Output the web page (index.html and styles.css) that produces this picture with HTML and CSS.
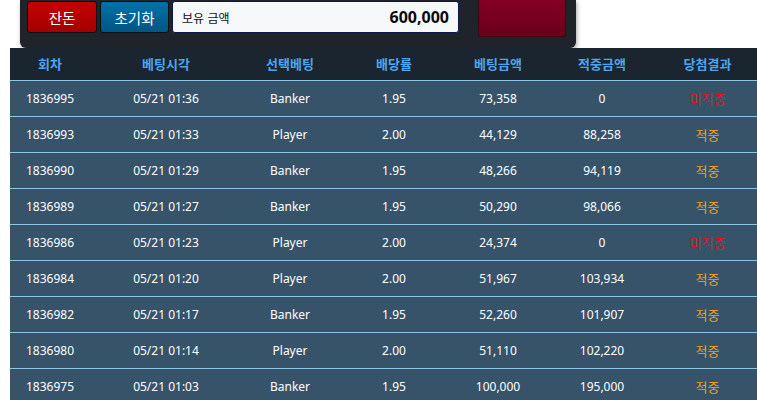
FILE: index.html
```html
<!DOCTYPE html>
<html lang="ko">
<head>
<meta charset="utf-8">
<link rel="stylesheet" href="styles.css">
</head>
<body>
<div class="panel">
  <button class="btn btn-red">잔돈</button>
  <button class="btn btn-blue">초기화</button>
  <div class="balance"><span class="label">보유 금액</span><span class="amount">600,000</span></div>
  <div class="action"></div>
</div>
<table class="bets">
  <colgroup>
    <col class="c1"><col class="c2"><col class="c3"><col class="c4"><col class="c5"><col class="c6"><col class="c7">
  </colgroup>
  <thead>
    <tr><th>회차</th><th>베팅시각</th><th>선택베팅</th><th>배당률</th><th>베팅금액</th><th>적중금액</th><th>당첨결과</th></tr>
  </thead>
  <tbody>
    <tr><td>1836995</td><td>05/21 01:36</td><td>Banker</td><td>1.95</td><td>73,358</td><td>0</td><td class="lose">미적중</td></tr>
    <tr><td>1836993</td><td>05/21 01:33</td><td>Player</td><td>2.00</td><td>44,129</td><td>88,258</td><td class="win">적중</td></tr>
    <tr><td>1836990</td><td>05/21 01:29</td><td>Banker</td><td>1.95</td><td>48,266</td><td>94,119</td><td class="win">적중</td></tr>
    <tr><td>1836989</td><td>05/21 01:27</td><td>Banker</td><td>1.95</td><td>50,290</td><td>98,066</td><td class="win">적중</td></tr>
    <tr><td>1836986</td><td>05/21 01:23</td><td>Player</td><td>2.00</td><td>24,374</td><td>0</td><td class="lose">미적중</td></tr>
    <tr><td>1836984</td><td>05/21 01:20</td><td>Player</td><td>2.00</td><td>51,967</td><td>103,934</td><td class="win">적중</td></tr>
    <tr><td>1836982</td><td>05/21 01:17</td><td>Banker</td><td>1.95</td><td>52,260</td><td>101,907</td><td class="win">적중</td></tr>
    <tr><td>1836980</td><td>05/21 01:14</td><td>Player</td><td>2.00</td><td>51,110</td><td>102,220</td><td class="win">적중</td></tr>
    <tr><td>1836975</td><td>05/21 01:03</td><td>Banker</td><td>1.95</td><td>100,000</td><td>195,000</td><td class="win">적중</td></tr>
  </tbody>
</table>
</body>
</html>
```
FILE: styles.css
```css
html, body {
  margin: 0;
  padding: 0;
  background: #ffffff;
  overflow: hidden;
  font-family: "Noto Sans", "Noto Sans CJK KR", sans-serif;
}

.panel {
  margin-left: 20px;
  width: 556px;
  height: 48px;
  box-sizing: border-box;
  padding-left: 7px;
  background: #1e2429;
  border-radius: 0 0 6px 6px;
  box-shadow: 1px 2px 4px rgba(0, 0, 0, 0.35);
  display: flex;
  align-items: flex-start;
  gap: 3px;
}

.btn {
  margin-top: 1px;
  height: 32px;
  border: 1px solid #0c0f12;
  border-radius: 3px;
  color: #ffffff;
  font-family: "Noto Sans CJK KR", sans-serif;
  font-size: 14.5px;
  padding: 0;
}

.btn-red {
  width: 70px;
  background: linear-gradient(#c40000, #a30000);
}

.btn-blue {
  width: 69px;
  background: linear-gradient(#0072a8, #005583);
}

.balance {
  margin-top: 1px;
  width: 287px;
  height: 32px;
  box-sizing: border-box;
  background: #f7f8fa;
  border: 1px solid #0b1a48;
  border-radius: 3px;
  display: flex;
  align-items: center;
  justify-content: space-between;
  padding: 0 9px 0 9px;
}

.label {
  font-family: "Noto Sans CJK KR", sans-serif;
  font-size: 12px;
  color: #111111;
}

.amount {
  font-size: 16px;
  font-weight: 700;
  color: #0a0a0a;
}

.action {
  margin-left: 16px;
  width: 88px;
  height: 37px;
  background: linear-gradient(#830022, #6a0018);
  border: 1px solid #3a0a10;
  border-top: none;
  border-radius: 0 0 3px 3px;
  box-sizing: border-box;
}

.bets {
  margin-left: 10px;
  width: 747px;
  border-collapse: collapse;
  table-layout: fixed;
}

.c1 { width: 80px; }
.c2 { width: 152px; }
.c3 { width: 96px; }
.c4 { width: 112px; }
.c5 { width: 96px; }
.c6 { width: 112px; }
.c7 { width: 99px; }

.bets thead tr { height: 32px; }
.bets tbody tr { height: 36px; }

.bets th {
  padding: 0;
  background: #1b2530;
  color: #4ba6ee;
  font-family: "Noto Sans CJK KR", sans-serif;
  font-size: 13px;
  font-weight: 700;
  text-align: center;
  border-bottom: 1px solid #8ec6e8;
}

.bets td {
  padding: 0;
  background: #36536a;
  color: #ffffff;
  font-size: 12px;
  text-align: center;
  border-bottom: 1px solid #8ec6e8;
}

.bets td.win {
  color: #f0a020;
  font-family: "Noto Sans CJK KR", sans-serif;
  font-size: 13px;
}

.bets td.lose {
  color: #e8101c;
  font-family: "Noto Sans CJK KR", sans-serif;
  font-size: 13px;
}
```
